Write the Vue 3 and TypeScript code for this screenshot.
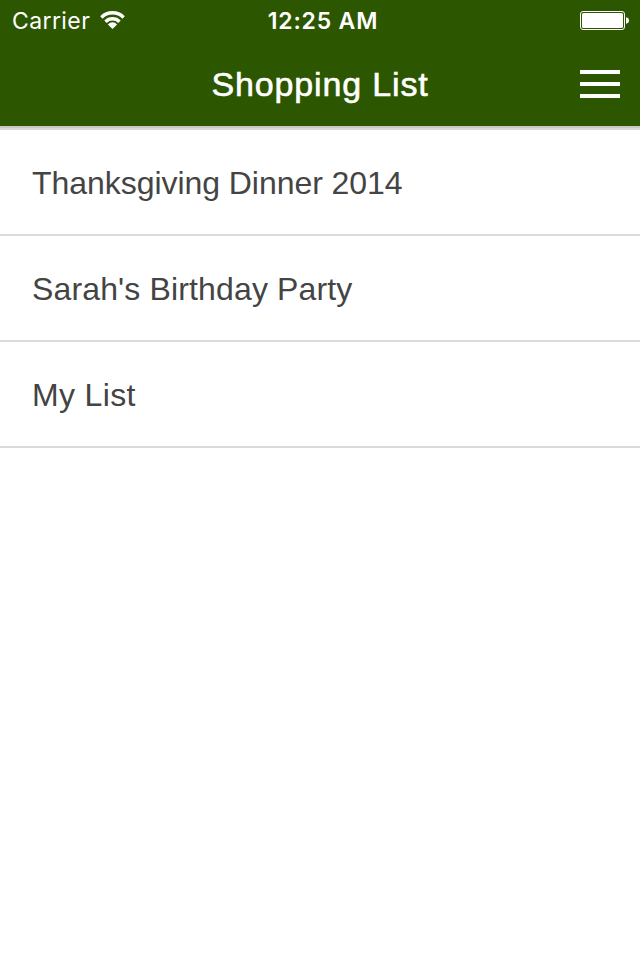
<script setup lang="ts">
interface ShoppingList {
  id: number
  name: string
}

const lists: ShoppingList[] = [
  { id: 1, name: 'Thanksgiving Dinner 2014' },
  { id: 2, name: "Sarah's Birthday Party" },
  { id: 3, name: 'My List' },
]
</script>

<template>
  <div class="screen">
    <header class="header">
      <div class="status">
        <div class="network">
          <span class="carrier">Carrier</span>
          <svg class="wifi" width="26" height="20" viewBox="0 0 26 20" aria-hidden="true">
            <g fill="none" stroke="#fff" stroke-width="3.5">
              <path d="M1.4 7.4A15.7 15.7 0 0 1 23.6 7.4" />
              <path d="M5.5 11.7A9.9 9.9 0 0 1 19.5 11.7" />
            </g>
            <path d="M7.9 14.4A6.2 6.2 0 0 1 17.1 14.4L12.5 19Z" fill="#fff" />
          </svg>
        </div>
        <span class="time">12:25 AM</span>
        <svg class="battery" width="50" height="20" viewBox="0 0 50 20" aria-hidden="true">
          <rect x="0.5" y="1.5" width="44" height="18" rx="2.5" fill="none" stroke="#fff" />
          <rect x="2" y="3" width="41" height="15" rx="1.6" fill="#fff" />
          <path d="M46 7.2Q49 7.8 49 10.5T46 13.8Z" fill="#fff" />
        </svg>
      </div>
      <div class="navbar">
        <h1 class="title">Shopping List</h1>
        <button class="menu" type="button" aria-label="Menu">
          <span class="bar"></span>
          <span class="bar"></span>
          <span class="bar"></span>
        </button>
      </div>
    </header>
    <ul class="lists">
      <li v-for="list in lists" :key="list.id" class="row">
        <span class="name">{{ list.name }}</span>
      </li>
    </ul>
  </div>
</template>

<style>
body {
  margin: 0;
  background: #fff;
}
</style>

<style scoped>
.screen {
  width: 640px;
  height: 960px;
  overflow: hidden;
  background: #fff;
  font-family: "Liberation Sans", Arial, sans-serif;
}
.header {
  height: 126px;
  background: #2d5600;
  color: #fff;
  border-bottom: 2px solid #c8c8c8;
  box-shadow: 0 2px 0 #dadada;
}
.status {
  display: grid;
  grid-template-columns: 1fr auto 1fr;
  align-items: center;
  box-sizing: border-box;
  height: 40px;
  padding: 0 10px 0 12px;
  font: 400 23px/38px Inter, sans-serif;
  white-space: nowrap;
}
.network {
  display: flex;
  align-items: center;
}
.carrier {
  width: 88px;
  padding-top: 2px;
  letter-spacing: 0.4px;
}
.wifi {
  display: block;
}
.time {
  padding: 2px 0 0 4px;
  font-weight: 590;
  letter-spacing: 0.8px;
}
.battery {
  justify-self: end;
}
.navbar {
  display: grid;
  grid-template-columns: 60px 1fr 60px;
  align-items: center;
  height: 88px;
}
.title {
  grid-column: 2;
  margin: 0;
  font-size: 34px;
  line-height: 88px;
  font-weight: 400;
  text-align: center;
  letter-spacing: 0.85px;
  -webkit-text-stroke: 0.6px #fff;
}
.menu {
  display: flex;
  flex-direction: column;
  gap: 8px;
  width: 40px;
  padding: 0;
  border: 0;
  background: none;
}
.bar {
  height: 4px;
  background: #fff;
}
.lists {
  margin: 2px 0 0;
  padding: 0;
  list-style: none;
}
.row {
  height: 104px;
  padding-left: 32px;
  border-bottom: 2px solid #dadada;
  color: #444;
  font-size: 32px;
  line-height: 106px;
  letter-spacing: -0.05px;
}
.row:nth-child(2) {
  letter-spacing: 0.14px;
}
.row:nth-child(3) {
  letter-spacing: 0.35px;
}
</style>
